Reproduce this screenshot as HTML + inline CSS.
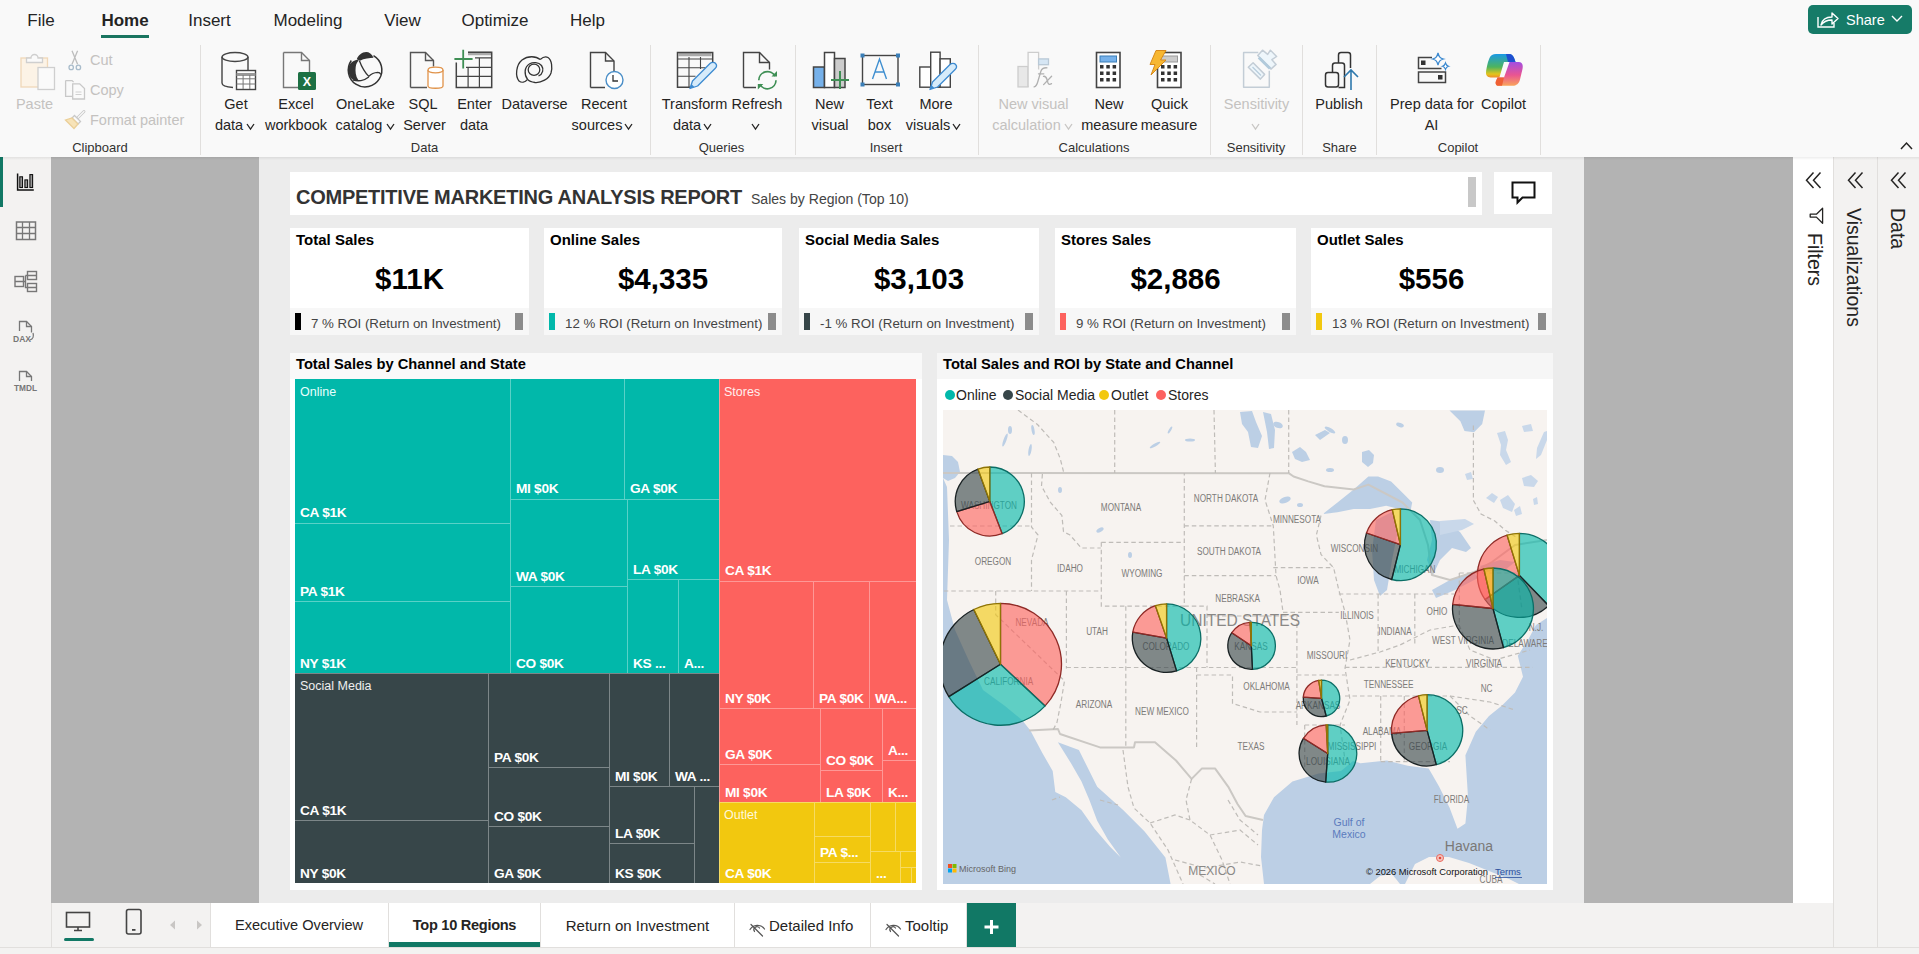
<!DOCTYPE html>
<html><head><meta charset="utf-8">
<style>
*{margin:0;padding:0;box-sizing:border-box}
html,body{width:1919px;height:954px;overflow:hidden;background:#f9f9f9;font-family:"Liberation Sans",sans-serif;color:#252423}
.a{position:absolute}
.t{position:absolute;white-space:nowrap;line-height:1}
#top{left:0;top:0;width:1919px;height:157px;background:#f9f9f9}
#nav{left:0;top:157px;width:51px;height:790px;background:#f3f2f1}
#gl{left:51px;top:157px;width:208px;height:746px;background:#b3b3b3}
#page{left:259px;top:157px;width:1325px;height:746px;background:#ececec}
#gr{left:1584px;top:157px;width:209px;height:746px;background:#b3b3b3}
#pf{left:1793px;top:157px;width:40px;height:746px;background:#fff}
#pv{left:1833px;top:157px;width:44px;height:790px;background:#f3f2f1;border-left:1px solid #e1dfdd}
#pd{left:1877px;top:157px;width:42px;height:790px;background:#f3f2f1;border-left:1px solid #e1dfdd}
#tabs{left:51px;top:903px;width:1782px;height:44px;background:#f3f2f1;border-left:1px solid #e1dfdd}
#bot{left:0;top:947px;width:1919px;height:7px;background:#f3f2f1;border-top:1px solid #e1dfdd}
</style></head><body>
<div id="top" class="a"></div>
<div id="nav" class="a"></div>
<div id="gl" class="a"></div>
<div id="page" class="a"></div>
<div id="gr" class="a"></div>
<div id="pf" class="a"></div>
<div id="pv" class="a"></div>
<div id="pd" class="a"></div>
<div id="tabs" class="a"></div>
<div id="bot" class="a"></div>
<div class="t" style="left:-109.0px;top:11.6px;width:300px;text-align:center;font-size:17px;color:#242424;">File</div>
<div class="t" style="left:-25.0px;top:11.6px;width:300px;text-align:center;font-size:17px;color:#242424;font-weight:bold;">Home</div>
<div class="t" style="left:59.5px;top:11.6px;width:300px;text-align:center;font-size:17px;color:#242424;">Insert</div>
<div class="t" style="left:158.0px;top:11.6px;width:300px;text-align:center;font-size:17px;color:#242424;">Modeling</div>
<div class="t" style="left:252.5px;top:11.6px;width:300px;text-align:center;font-size:17px;color:#242424;">View</div>
<div class="t" style="left:345.0px;top:11.6px;width:300px;text-align:center;font-size:17px;color:#242424;">Optimize</div>
<div class="t" style="left:437.5px;top:11.6px;width:300px;text-align:center;font-size:17px;color:#242424;">Help</div>
<div class="a" style="left:101px;top:35px;width:48px;height:3px;background:#1a7560"></div>
<div class="a" style="left:1808px;top:5px;width:104px;height:29px;background:#167b68;border-radius:5px"></div>
<div class="t" style="left:1846.0px;top:12.7px;font-size:14.5px;color:#fff;">Share</div>
<svg class="a" style="left:1808px;top:5px" width="104" height="29"><g fill="none" stroke="#fff" stroke-width="1.4"><path d="M10 12v10h16v-4"/><path d="M13 20c1-5 5-8 11-8v-4l6 5.5-6 5.5v-4c-4 0-8 1-11 5z" stroke-linejoin="round"/><path d="M84 11l5 5 5-5"/></g></svg>
<div class="t" style="left:-115.5px;top:96.7px;width:300px;text-align:center;font-size:14.5px;color:#c4c2c0;">Paste</div>
<div class="t" style="left:90.0px;top:52.7px;font-size:14.5px;color:#c4c2c0;">Cut</div>
<div class="t" style="left:90.0px;top:82.7px;font-size:14.5px;color:#c4c2c0;">Copy</div>
<div class="t" style="left:90.0px;top:112.7px;font-size:14.5px;color:#c4c2c0;">Format painter</div>
<div class="t" style="left:86.0px;top:96.7px;width:300px;text-align:center;font-size:14.5px;color:#252423;">Get</div>
<div class="t" style="left:79.0px;top:117.5px;width:300px;text-align:center;font-size:14.5px;color:#252423;">data</div>
<div class="t" style="left:146.0px;top:96.7px;width:300px;text-align:center;font-size:14.5px;color:#252423;">Excel</div>
<div class="t" style="left:146.0px;top:117.5px;width:300px;text-align:center;font-size:14.5px;color:#252423;">workbook</div>
<div class="t" style="left:215.5px;top:96.7px;width:300px;text-align:center;font-size:14.5px;color:#252423;">OneLake</div>
<div class="t" style="left:209.0px;top:117.5px;width:300px;text-align:center;font-size:14.5px;color:#252423;">catalog</div>
<div class="t" style="left:273.0px;top:96.7px;width:300px;text-align:center;font-size:14.5px;color:#252423;">SQL</div>
<div class="t" style="left:274.5px;top:117.5px;width:300px;text-align:center;font-size:14.5px;color:#252423;">Server</div>
<div class="t" style="left:324.5px;top:96.7px;width:300px;text-align:center;font-size:14.5px;color:#252423;">Enter</div>
<div class="t" style="left:324.0px;top:117.5px;width:300px;text-align:center;font-size:14.5px;color:#252423;">data</div>
<div class="t" style="left:384.5px;top:96.7px;width:300px;text-align:center;font-size:14.5px;color:#252423;">Dataverse</div>
<div class="t" style="left:454.0px;top:96.7px;width:300px;text-align:center;font-size:14.5px;color:#252423;">Recent</div>
<div class="t" style="left:447.0px;top:117.5px;width:300px;text-align:center;font-size:14.5px;color:#252423;">sources</div>
<div class="t" style="left:544.5px;top:96.7px;width:300px;text-align:center;font-size:14.5px;color:#252423;">Transform</div>
<div class="t" style="left:537.0px;top:117.5px;width:300px;text-align:center;font-size:14.5px;color:#252423;">data</div>
<div class="t" style="left:607.0px;top:96.7px;width:300px;text-align:center;font-size:14.5px;color:#252423;">Refresh</div>
<div class="t" style="left:679.5px;top:96.7px;width:300px;text-align:center;font-size:14.5px;color:#252423;">New</div>
<div class="t" style="left:680.0px;top:117.5px;width:300px;text-align:center;font-size:14.5px;color:#252423;">visual</div>
<div class="t" style="left:729.5px;top:96.7px;width:300px;text-align:center;font-size:14.5px;color:#252423;">Text</div>
<div class="t" style="left:729.5px;top:117.5px;width:300px;text-align:center;font-size:14.5px;color:#252423;">box</div>
<div class="t" style="left:786.0px;top:96.7px;width:300px;text-align:center;font-size:14.5px;color:#252423;">More</div>
<div class="t" style="left:778.0px;top:117.5px;width:300px;text-align:center;font-size:14.5px;color:#252423;">visuals</div>
<div class="t" style="left:883.5px;top:96.7px;width:300px;text-align:center;font-size:14.5px;color:#c4c2c0;">New visual</div>
<div class="t" style="left:876.5px;top:117.5px;width:300px;text-align:center;font-size:14.5px;color:#c4c2c0;">calculation</div>
<div class="t" style="left:959.0px;top:96.7px;width:300px;text-align:center;font-size:14.5px;color:#252423;">New</div>
<div class="t" style="left:959.5px;top:117.5px;width:300px;text-align:center;font-size:14.5px;color:#252423;">measure</div>
<div class="t" style="left:1019.5px;top:96.7px;width:300px;text-align:center;font-size:14.5px;color:#252423;">Quick</div>
<div class="t" style="left:1019.0px;top:117.5px;width:300px;text-align:center;font-size:14.5px;color:#252423;">measure</div>
<div class="t" style="left:1106.5px;top:96.7px;width:300px;text-align:center;font-size:14.5px;color:#c4c2c0;">Sensitivity</div>
<div class="t" style="left:1189.0px;top:96.7px;width:300px;text-align:center;font-size:14.5px;color:#252423;">Publish</div>
<div class="t" style="left:1282.0px;top:96.7px;width:300px;text-align:center;font-size:14.5px;color:#252423;">Prep data for</div>
<div class="t" style="left:1281.5px;top:117.5px;width:300px;text-align:center;font-size:14.5px;color:#252423;">AI</div>
<div class="t" style="left:1353.5px;top:96.7px;width:300px;text-align:center;font-size:14.5px;color:#252423;">Copilot</div>
<div class="t" style="left:-50.0px;top:141.0px;width:300px;text-align:center;font-size:13px;color:#323130;">Clipboard</div>
<div class="t" style="left:274.5px;top:141.0px;width:300px;text-align:center;font-size:13px;color:#323130;">Data</div>
<div class="t" style="left:571.5px;top:141.0px;width:300px;text-align:center;font-size:13px;color:#323130;">Queries</div>
<div class="t" style="left:736.0px;top:141.0px;width:300px;text-align:center;font-size:13px;color:#323130;">Insert</div>
<div class="t" style="left:944.0px;top:141.0px;width:300px;text-align:center;font-size:13px;color:#323130;">Calculations</div>
<div class="t" style="left:1106.0px;top:141.0px;width:300px;text-align:center;font-size:13px;color:#323130;">Sensitivity</div>
<div class="t" style="left:1189.5px;top:141.0px;width:300px;text-align:center;font-size:13px;color:#323130;">Share</div>
<div class="t" style="left:1308.0px;top:141.0px;width:300px;text-align:center;font-size:13px;color:#323130;">Copilot</div>
<div class="a" style="left:200px;top:45px;width:1px;height:110px;background:#e1dfdd"></div>
<div class="a" style="left:650px;top:45px;width:1px;height:110px;background:#e1dfdd"></div>
<div class="a" style="left:795px;top:45px;width:1px;height:110px;background:#e1dfdd"></div>
<div class="a" style="left:978px;top:45px;width:1px;height:110px;background:#e1dfdd"></div>
<div class="a" style="left:1210px;top:45px;width:1px;height:110px;background:#e1dfdd"></div>
<div class="a" style="left:1302px;top:45px;width:1px;height:110px;background:#e1dfdd"></div>
<div class="a" style="left:1376px;top:45px;width:1px;height:110px;background:#e1dfdd"></div>
<div class="a" style="left:1540px;top:45px;width:1px;height:110px;background:#e1dfdd"></div>
<svg class="a" style="left:0;top:0" width="1919" height="157">
<path d="M247 124l3.5 5l3.5 -5" fill="none" stroke="#252423" stroke-width="1.3"/><path d="M387 124l3.5 5l3.5 -5" fill="none" stroke="#252423" stroke-width="1.3"/><path d="M625 124l3.5 5l3.5 -5" fill="none" stroke="#252423" stroke-width="1.3"/><path d="M704 124l3.5 5l3.5 -5" fill="none" stroke="#252423" stroke-width="1.3"/><path d="M752 124l3.5 5l3.5 -5" fill="none" stroke="#252423" stroke-width="1.3"/><path d="M953 124l3.5 5l3.5 -5" fill="none" stroke="#252423" stroke-width="1.3"/><path d="M1065 124l3.5 5l3.5 -5" fill="none" stroke="#c8c6c4" stroke-width="1.3"/><path d="M1252 124l3.5 5l3.5 -5" fill="none" stroke="#c8c6c4" stroke-width="1.3"/><path d="M1901 149l5.5-6 5.5 6" fill="none" stroke="#252423" stroke-width="1.5"/><g fill="none" stroke-width="1.3"><rect x="21" y="58" width="26.5" height="29" stroke="#f0d8b8" fill="#fcf3e6"/><path d="M26.5 62.5v-4.5h4.5a3.5 3.5 0 0 1 7 0h4.5v4.5z" stroke="#cfcfcf" fill="#fafafa"/><rect x="38" y="67.5" width="16.5" height="22" stroke="#cfcfcf" fill="#fafafa"/><path d="M72 50.7l5.6 13.6M77.6 50.7l-5.6 13.6" stroke="#bdbdbd"/><circle cx="71.2" cy="67.4" r="2.2" stroke="#a9bccb"/><circle cx="78.4" cy="67.4" r="2.2" stroke="#a9bccb"/><path d="M65.6 80.6h6.5l1.5 1.5M65.6 80.6v15.8h6.5" stroke="#c8c8c8"/><path d="M72.7 83.8h7l4.8 4.8v10.4h-11.8z" stroke="#c8c8c8" fill="#fafafa"/><path d="M75.5 92h6M75.5 94.5h6" stroke="#d0d0d0" stroke-width="1"/><path d="M84 111.5l-6 6" stroke="#c8c8c8" stroke-width="2.8" stroke-linecap="round"/><path d="M84 111.5l-6 6" stroke="#fafafa" stroke-width="1.1" stroke-linecap="round"/><path d="M74.5 115.5l6 6-2.5 2.5-6-6z" stroke="#c8c8c8" fill="#fafafa"/><path d="M72 118l6 6-4 4.5-8.5-8.5z" stroke="#ebcf98" fill="#f7e3b8"/></g>
<g fill="none" stroke="#444" stroke-width="1.4"><ellipse cx="235" cy="57" rx="13" ry="4.5"/><path d="M222 57v26c0 2.5 4 4 11 4.5M248 57v13"/><rect x="236.5" y="70.5" width="19" height="19" fill="#fff"/><path d="M236.5 74.5h19" stroke="#999" stroke-width="3"/><path d="M236.5 78.8h19M236.5 84h19M243.1 75v14M249.8 75v14" stroke="#777" stroke-width="1"/></g>
<g fill="none" stroke="#777" stroke-width="1.4"><path d="M283.5 52.5h18l8 8v12M298 87.5h-14.5v-35"/><path d="M301.5 52.5v8h8"/></g><rect x="298" y="72" width="18" height="18" rx="1.5" fill="#1d7044"/><text x="307" y="86" text-anchor="middle" font-family="Liberation Sans" font-weight="bold" font-size="12.5" fill="#fff">X</text>
<path d="M373.5 55.6 A16.8 16.8 0 1 1 351.3 60.5" fill="none" stroke="#333" stroke-width="1.5"/><path d="M356.8 59.2 C358 55.5 362 52.1 366.2 52.1 C369 52.1 372 54 373.5 57.8 C370 58 364 58.6 359.9 60.7z" fill="#333"/><path d="M357.3 59.7 C352 60.5 348.4 64.5 348.4 69.5 C348.4 75 351 79 353.6 80.1 L358.3 80.1 C355.5 76 355.2 71 355.7 67 C356 63.5 357.5 61.5 358.9 60.7z" fill="#333"/><path d="M359.4 60.7 C361 65 363.5 71 368.8 76.4 C371 74 374 72.5 377.7 72.3 C379 72.3 380.5 73.5 380.9 74.4" fill="none" stroke="#333" stroke-width="1.3"/><path d="M353.1 80.1 C356 80.8 359 80.8 361 80.6 C364 80.2 366.5 78.8 368.8 77" fill="none" stroke="#333" stroke-width="1.3"/>
<g fill="none" stroke="#555" stroke-width="1.4"><path d="M410.5 87.5v-35h15l8 8v6M427 87.5h-16.5"/><path d="M425.5 52.5v8h8"/></g><g fill="#fff" stroke="#e0934a" stroke-width="1.3"><path d="M428 70v16c0 3 15 3 15 0v-16"/><ellipse cx="435.5" cy="70" rx="7.5" ry="2.8"/></g>
<path d="M468 53.5h23.2" stroke="#aaa" stroke-width="3.5"/><g fill="none" stroke="#444" stroke-width="1.5"><path d="M468 52.3h23.7v35.2h-35.4v-25"/><path d="M475 57.8h16.7M466 67.4h25.7M456.3 76.3h35.4M468.1 67.4v20.1M479.4 57.8v29.7" stroke-width="1.2"/></g><path d="M463.2 49.7v18.7M454.4 59h18.2" stroke="#3f8f55" stroke-width="1.8"/>
<g fill="none" stroke="#333" stroke-width="1.3"><path d="M540.2 59.6C536 56 528 55.5 522 60C516 65 515 76 519 81C521.5 83 525 82.5 527.6 79.4"/><path d="M540.2 59.6C543 57 546 56.5 548 57.5C552 60 552.5 68 551 73C549 79 541 83 535 82.5C531 82 528.5 80.5 527.6 79.4"/><path d="M527.6 79.4C524 75 524 67 529.7 63.8C533 62 538.5 62 541.5 65.5C544 69 543 74 538.5 76"/><ellipse cx="534" cy="69.7" rx="5.8" ry="5.6"/></g>
<g fill="none" stroke="#444" stroke-width="1.4"><path d="M590.5 87.5v-35h15l8.5 8.5v11M605 87.5h-14.5"/><path d="M605.5 52.5v8.5h8.5"/></g><circle cx="614.5" cy="80" r="8.5" fill="#fff" stroke="#4a8ec7" stroke-width="1.4"/><path d="M613 75v6h5" fill="none" stroke="#333" stroke-width="1.3"/>
<path d="M678.5 54.5h33" stroke="#aaa" stroke-width="3.5"/><g fill="none" stroke="#444" stroke-width="1.5"><path d="M712.7 68v-15.5h-35.2v34.7h13"/><path d="M677.5 59h35.2M677.5 67.7h28M677.5 76.3h18M689 57v30M700.5 57v12" stroke-width="1.1"/></g><path d="M690 88.5l2.5-7.5 17.5-17.5c1.6-1.6 4.4-1.6 5.6 0 1.2 1.4 1 3.6-.5 5l-17.5 17.5z" fill="#d6ebfa" stroke="#3d8ad0" stroke-width="1.3" stroke-linejoin="round"/><path d="M690 88.5l1.4-4.5 3 3z" fill="#3d8ad0"/>
<g fill="none" stroke="#444" stroke-width="1.4"><path d="M743.5 87.5v-35h16l10 10v7M756 87.5h-12.5"/><path d="M759.5 52.5v10h10"/></g><g fill="none" stroke="#3f8f55" stroke-width="1.7"><path d="M758.8 80.2a8.6 8.6 0 0 1 16.2-4"/><path d="M776 80.2a8.6 8.6 0 0 1-16.2 4"/></g><path d="M771.5 76.5h5.5v-5.5z" fill="#3f8f55"/><path d="M763.3 84h-5.5v5.5z" fill="#3f8f55"/>
<g stroke="#444" stroke-width="1.5"><rect x="813.5" y="67" width="11" height="20.5" fill="#76b1ea"/><rect x="824.5" y="52.5" width="10" height="35" fill="#fff"/><rect x="834.5" y="58.5" width="10.5" height="29" fill="#ccc"/></g><path d="M840 71v18M831 80h18" stroke="#3f8f55" stroke-width="2"/>
<rect x="862.5" y="55.5" width="35.5" height="29" fill="none" stroke="#444" stroke-width="1.4"/><rect x="860.5" y="53.5" width="4" height="4" fill="#3a7fb8"/><rect x="896" y="53.5" width="4" height="4" fill="#3a7fb8"/><rect x="860.5" y="82.5" width="4" height="4" fill="#3a7fb8"/><rect x="896" y="82.5" width="4" height="4" fill="#3a7fb8"/><path d="M872.5 79l7-20 7 20M875 72h9" fill="none" stroke="#3f8fd0" stroke-width="1.4"/>
<g fill="#fff" stroke="#444" stroke-width="1.4"><rect x="919.8" y="67" width="10.9" height="20.2"/><rect x="930.7" y="52.2" width="9.4" height="35"/><rect x="940.1" y="58.8" width="10.2" height="28.4"/></g><path d="M930 89.5l2.5-7.5 17.5-17.5c1.6-1.6 4.4-1.6 5.6 0 1.2 1.4 1 3.6-.5 5l-17.5 17.5z" fill="#d6ebfa" stroke="#3d8ad0" stroke-width="1.3" stroke-linejoin="round"/><path d="M930 89.5l1.4-4.5 3 3z" fill="#3d8ad0"/>
<g stroke="#cdcdcd" stroke-width="1.3"><rect x="1018" y="66.5" width="10.1" height="20.4" fill="#e8e8e8"/><path d="M1028.1 86.9V52.4H1038.6V69.6" fill="#fafafa"/><rect x="1038.6" y="58.9" width="9.9" height="5.8" fill="#d6e6f4" stroke="#b9c9d6"/></g><g fill="none" stroke="#b0b0b0" stroke-width="1.3" stroke-linecap="round"><path d="M1034.1 86.9C1036 86.5 1037 85 1038 81L1040.8 71.5C1041.8 68.5 1043.5 67.5 1047 67.8"/><path d="M1038.5 73.8H1043.8"/><path d="M1043.5 76.3C1045.3 76 1046.3 77.2 1047 79.5L1048 83C1048.6 84.6 1050 84.6 1051.5 83.6"/><path d="M1051.6 76.3L1043.6 84.6"/></g>
<rect x="1096.5" y="52.5" width="23.5" height="35" fill="#fff" stroke="#444" stroke-width="1.6"/><rect x="1100" y="56" width="16.5" height="6" fill="#76b1ea" stroke="#3a7fb8" stroke-width="1"/><rect x="1100.0" y="65.0" width="3.5" height="3.5" fill="#333"/><rect x="1100.0" y="71.5" width="3.5" height="3.5" fill="#333"/><rect x="1100.0" y="78.0" width="3.5" height="3.5" fill="#333"/><rect x="1106.3" y="65.0" width="3.5" height="3.5" fill="#333"/><rect x="1106.3" y="71.5" width="3.5" height="3.5" fill="#333"/><rect x="1106.3" y="78.0" width="3.5" height="3.5" fill="#333"/><rect x="1112.6" y="65.0" width="3.5" height="3.5" fill="#333"/><rect x="1112.6" y="71.5" width="3.5" height="3.5" fill="#333"/><rect x="1112.6" y="78.0" width="3.5" height="3.5" fill="#333"/>
<rect x="1157.5" y="52.5" width="23.5" height="35" fill="#fff" stroke="#444" stroke-width="1.6"/><rect x="1161" y="56" width="16.5" height="6" fill="#ccc" stroke="#999" stroke-width="1"/><rect x="1161.0" y="65.0" width="3.5" height="3.5" fill="#333"/><rect x="1161.0" y="71.5" width="3.5" height="3.5" fill="#333"/><rect x="1161.0" y="78.0" width="3.5" height="3.5" fill="#333"/><rect x="1167.3" y="65.0" width="3.5" height="3.5" fill="#333"/><rect x="1167.3" y="71.5" width="3.5" height="3.5" fill="#333"/><rect x="1167.3" y="78.0" width="3.5" height="3.5" fill="#333"/><rect x="1173.6" y="65.0" width="3.5" height="3.5" fill="#333"/><rect x="1173.6" y="71.5" width="3.5" height="3.5" fill="#333"/><rect x="1173.6" y="78.0" width="3.5" height="3.5" fill="#333"/><path d="M1156 50.5h10l-5.5 9.5h5.5l-15 15 4-10.5h-5z" fill="#f7b731" stroke="#d88a1a" stroke-width="1" stroke-linejoin="round"/>
<g stroke="#c3cdd6" stroke-width="1.5" stroke-linejoin="round"><path d="M1258.3 52.6H1243.6V87.2H1269.3V70.7" fill="none"/><path d="M1248.3 67.3L1253.1 62.8L1264.6 74.4L1260.4 79.1z" fill="#eef6fb"/><path d="M1257.8 55.5L1262.5 50.2L1267.7 54.4L1270.4 50.2L1276.6 56.5L1271.9 59.7L1276.1 64.4L1270.9 69.1z" fill="#eef6fb"/></g><path d="M1252.5 67L1261 75.5" stroke="#b7cddc" stroke-width="1.2"/><path d="M1258.8 57.5L1270 68.5" stroke="#b1cadb" stroke-width="3"/>
<g fill="none" stroke="#333" stroke-width="1.5"><rect x="1325.5" y="72.5" width="13" height="14.5" rx="2.5"/><path d="M1332.5 72.5v-7a2.5 2.5 0 0 1 2.5-2.5h7a2.5 2.5 0 0 1 2.5 2.5v22h-6"/><path d="M1338.5 63v-8a2.5 2.5 0 0 1 2.5-2.5h7a2.5 2.5 0 0 1 2.5 2.5v13"/></g><path d="M1351 90v-20M1344 77l7-7 7 7" fill="none" stroke="#2f79ad" stroke-width="1.6"/>
<g fill="none" stroke="#444" stroke-width="1.5"><path d="M1432 57.5h-13.5v11h23"/><rect x="1418.5" y="72" width="27" height="10.5"/></g><rect x="1421" y="60.5" width="4.5" height="4.5" fill="#333"/><rect x="1438" y="75" width="4.5" height="4.5" fill="#333"/><path d="M1438 53c1 4 2 5 5.5 6-3.5 1-4.5 2-5.5 6-1-4-2-5-5.5-6 3.5-1 4.5-2 5.5-6z" fill="#fff" stroke="#3d8ad0" stroke-width="1.3"/><path d="M1445.5 63c.6 2 1 2.6 3 3.2-2 .6-2.4 1.2-3 3.2-.6-2-1-2.6-3-3.2 2-.6 2.4-1.2 3-3.2z" fill="#fff" stroke="#3d8ad0" stroke-width="1.2"/>
<defs><linearGradient id="cpa" x1="0" y1="0" x2="0" y2="1"><stop offset="0" stop-color="#1a9ae6"/><stop offset=".55" stop-color="#4db45e"/><stop offset=".85" stop-color="#e3c51c"/><stop offset="1" stop-color="#f08a2a"/></linearGradient><linearGradient id="cpb" x1="0" y1="0" x2="0" y2="1"><stop offset="0" stop-color="#a24ee2"/><stop offset=".55" stop-color="#ea5591"/><stop offset="1" stop-color="#f9a55a"/></linearGradient></defs><path d="M1496 54H1509C1512 54 1513.5 56 1514.5 59L1515.5 62H1504L1499.4 77.5H1493.8C1489 78 1486 76.5 1486 73C1486 70 1487 66 1488 62L1489.5 58C1490.5 55.5 1493 54 1496 54z" fill="url(#cpa)"/><path d="M1506 54H1509C1512 54 1513.5 56 1514.5 59L1515.5 62H1508z" fill="#1f4fd0"/><path d="M1509.5 62H1519C1522 62 1523.5 65 1522.5 69L1520 79.5C1519 83.5 1516.5 85.8 1512.5 85.8H1498.5C1496 85.8 1495 83.5 1496 81L1497.5 77.5H1504z" fill="url(#cpb)"/><path d="M1497.5 77.5H1504L1502 85.8H1498.5C1496 85.8 1495 83.5 1496 81z" fill="#ef6034"/>
</svg>
<div class="a" style="left:0;top:157px;width:3px;height:50px;background:#117865"></div>
<svg class="a" style="left:0;top:157px" width="51" height="250"><path d="M17.6 16.4V32.9H33.8" fill="none" stroke="#111" stroke-width="1.5"/><g fill="#999" stroke="#111" stroke-width="1.1"><rect x="19.8" y="19.8" width="2.7" height="10.7"/><rect x="24.9" y="22.9" width="2.7" height="7.6"/><rect x="29.9" y="17.6" width="2.7" height="12.9"/></g><g fill="none" stroke="#777" stroke-width="1.5"><rect x="16.5" y="65" width="19" height="17.5"/><path d="M16.5 70.5h19M16.5 76.5h19M22.5 65v17.5M29.5 65v17.5" stroke-width="1.3"/></g><g fill="none" stroke="#777" stroke-width="1.4"><rect x="15" y="119.5" width="8.5" height="10"/><rect x="27.5" y="114.5" width="9" height="8"/><rect x="27.5" y="126.5" width="9" height="8"/><path d="M23.5 124.5h2M25.5 118.5v12h2M25.5 118.5h2M15 124.5h8.5M27.5 118.5h9M27.5 130.5h9"/></g><g fill="none" stroke="#777" stroke-width="1.3"><path d="M19.5 174v-9.5h7l5 5v6"/><path d="M26.5 164.5v5h5"/><path d="M33 176c1 3 0 6-3 7"/></g><text x="13" y="184.5" font-family="Liberation Sans" font-weight="bold" font-size="8.5" fill="#777">DAX</text><g fill="none" stroke="#777" stroke-width="1.3"><path d="M19.5 224v-9.5h7l5 5v4.5"/><path d="M26.5 214.5v5h5"/></g><text x="14" y="234" font-family="Liberation Sans" font-weight="bold" font-size="8.5" fill="#777" textLength="23" lengthAdjust="spacingAndGlyphs">TMDL</text></svg>
<div class="a" style="left:0;top:157px;width:1919px;height:3px;background:linear-gradient(rgba(0,0,0,.07),rgba(0,0,0,0))"></div>
<svg class="a" style="left:1793px;top:157px" width="126" height="200"><path d="M20.5 15.5l-7 7.75 7 7.75M27.5 15.5l-7 7.75 7 7.75" fill="none" stroke="#252423" stroke-width="1.5"/><path d="M62.5 15.5l-7 7.75 7 7.75M69.5 15.5l-7 7.75 7 7.75" fill="none" stroke="#252423" stroke-width="1.5"/><path d="M105.5 15.5l-7 7.75 7 7.75M112.5 15.5l-7 7.75 7 7.75" fill="none" stroke="#252423" stroke-width="1.5"/><path d="M29.6 51.3V66.3L23.4 60.1H17.2V57.2H23.4z" fill="none" stroke="#252423" stroke-width="1.3" stroke-linejoin="round"/></svg>
<div class="t" style="left:1806px;top:233px;font-size:19.5px;color:#252423;transform-origin:0 0;transform:translate(18px,0) rotate(90deg)">Filters</div>
<div class="t" style="left:1845px;top:208px;font-size:19.5px;color:#252423;transform-origin:0 0;transform:translate(18px,0) rotate(90deg)">Visualizations</div>
<div class="t" style="left:1889px;top:208px;font-size:19.5px;color:#252423;transform-origin:0 0;transform:translate(18px,0) rotate(90deg)">Data</div>
<div class="a" style="left:211px;top:903px;width:177px;height:44px;background:#fff"></div>
<div class="a" style="left:388px;top:903px;width:1px;height:44px;background:#e1dfdd"></div>
<div class="a" style="left:389px;top:903px;width:151px;height:44px;background:#fff"></div>
<div class="a" style="left:540px;top:903px;width:1px;height:44px;background:#e1dfdd"></div>
<div class="a" style="left:541px;top:903px;width:193px;height:44px;background:#fff"></div>
<div class="a" style="left:734px;top:903px;width:1px;height:44px;background:#e1dfdd"></div>
<div class="a" style="left:735px;top:903px;width:135px;height:44px;background:#fff"></div>
<div class="a" style="left:870px;top:903px;width:1px;height:44px;background:#e1dfdd"></div>
<div class="a" style="left:871px;top:903px;width:95px;height:44px;background:#fff"></div>
<div class="a" style="left:966px;top:903px;width:1px;height:44px;background:#e1dfdd"></div>
<div class="a" style="left:210px;top:903px;width:1px;height:44px;background:#e1dfdd"></div>
<div class="a" style="left:389px;top:942px;width:151px;height:5px;background:#117865"></div>
<div class="t" style="left:149.0px;top:918.3px;width:300px;text-align:center;font-size:14.6px;color:#252423;">Executive Overview</div>
<div class="t" style="left:314.5px;top:918.3px;width:300px;text-align:center;font-size:14.6px;color:#252423;font-weight:bold;letter-spacing:-0.3px;">Top 10 Regions</div>
<div class="t" style="left:487.5px;top:918.3px;width:300px;text-align:center;font-size:15px;color:#252423;">Return on Investment</div>
<div class="t" style="left:769.0px;top:918.3px;font-size:15px;color:#252423;">Detailed Info</div>
<div class="t" style="left:905.0px;top:918.3px;font-size:15px;color:#252423;">Tooltip</div>
<div class="a" style="left:967px;top:903px;width:49px;height:44px;background:#117865"></div>
<svg class="a" style="left:0;top:903px" width="1020" height="44"><path d="M991.5 17v14M984.5 24h14" stroke="#fff" stroke-width="3"/><g fill="none" stroke="#555" stroke-width="1.2" stroke-linecap="round"><path d="M750 26.5C753 21.5 761 20.5 764.5 26"/><path d="M754.5 28.5A3 3 0 0 1 759.5 25"/><path d="M751 21.5L762.5 33"/></g><g fill="none" stroke="#555" stroke-width="1.2" stroke-linecap="round"><path d="M886 26.5C889 21.5 897 20.5 900.5 26"/><path d="M890.5 28.5A3 3 0 0 1 895.5 25"/><path d="M887 21.5L898.5 33"/></g><g fill="none" stroke="#444" stroke-width="1.6"><rect x="66.5" y="9.5" width="23" height="14.5"/><path d="M78 24v3M74 27.5h8"/></g><rect x="64" y="35" width="30" height="3" rx="1.5" fill="#117865"/><g fill="none" stroke="#444" stroke-width="1.6"><rect x="126.5" y="6.5" width="14.5" height="24.5" rx="2"/></g><rect x="132" y="26" width="3.5" height="1.8" fill="#444"/><path d="M175 17.5l-5 4.5 5 4.5z" fill="#c8c6c4"/><path d="M197 17.5l5 4.5-5 4.5z" fill="#c8c6c4"/></svg>
<div class="a" style="left:290px;top:172px;width:1192px;height:43px;background:#fff"></div>
<div class="t" style="left:296.0px;top:187.1px;font-size:20px;color:#333;font-weight:bold;letter-spacing:-0.25px;">COMPETITIVE MARKETING ANALYSIS REPORT</div>
<div class="t" style="left:751.0px;top:192.1px;font-size:14.05px;color:#444;">Sales by Region (Top 10)</div>
<div class="a" style="left:1468px;top:177px;width:8px;height:30px;background:#c8c8c8"></div>
<div class="a" style="left:1494px;top:172px;width:58px;height:42px;background:#fff"></div>
<svg class="a" style="left:1494px;top:172px" width="58" height="42"><path d="M18.5 10.5h22v15h-12l-5 5v-5h-5z" fill="none" stroke="#111" stroke-width="2" stroke-linejoin="miter"/></svg>
<div class="a" style="left:290px;top:228px;width:239px;height:107px;background:#fff"></div>
<div class="a" style="left:290px;top:308px;width:239px;height:27px;background:#f7f7f7"></div>
<div class="t" style="left:296.0px;top:231.8px;font-size:15px;color:#000;font-weight:bold;">Total Sales</div>
<div class="t" style="left:259.5px;top:264.0px;width:300px;text-align:center;font-size:29.5px;color:#000;font-weight:bold;">$11K</div>
<div class="a" style="left:295px;top:313px;width:6px;height:17px;background:#000"></div>
<div class="a" style="left:515px;top:313px;width:8px;height:17px;background:#8c8c8c"></div>
<div class="t" style="left:311.0px;top:316.7px;font-size:13.3px;color:#444;">7 % ROI (Return on Investment)</div>
<div class="a" style="left:544px;top:228px;width:238px;height:107px;background:#fff"></div>
<div class="a" style="left:544px;top:308px;width:238px;height:27px;background:#f7f7f7"></div>
<div class="t" style="left:550.0px;top:231.8px;font-size:15px;color:#000;font-weight:bold;">Online Sales</div>
<div class="t" style="left:513.0px;top:264.0px;width:300px;text-align:center;font-size:29.5px;color:#000;font-weight:bold;">$4,335</div>
<div class="a" style="left:549px;top:313px;width:6px;height:17px;background:#01b8aa"></div>
<div class="a" style="left:768px;top:313px;width:8px;height:17px;background:#8c8c8c"></div>
<div class="t" style="left:565.0px;top:316.7px;font-size:13.3px;color:#444;">12 % ROI (Return on Investment)</div>
<div class="a" style="left:799px;top:228px;width:240px;height:107px;background:#fff"></div>
<div class="a" style="left:799px;top:308px;width:240px;height:27px;background:#f7f7f7"></div>
<div class="t" style="left:805.0px;top:231.8px;font-size:15px;color:#000;font-weight:bold;">Social Media Sales</div>
<div class="t" style="left:769.0px;top:264.0px;width:300px;text-align:center;font-size:29.5px;color:#000;font-weight:bold;">$3,103</div>
<div class="a" style="left:804px;top:313px;width:6px;height:17px;background:#374649"></div>
<div class="a" style="left:1025px;top:313px;width:8px;height:17px;background:#8c8c8c"></div>
<div class="t" style="left:820.0px;top:316.7px;font-size:13.3px;color:#444;">-1 % ROI (Return on Investment)</div>
<div class="a" style="left:1055px;top:228px;width:241px;height:107px;background:#fff"></div>
<div class="a" style="left:1055px;top:308px;width:241px;height:27px;background:#f7f7f7"></div>
<div class="t" style="left:1061.0px;top:231.8px;font-size:15px;color:#000;font-weight:bold;">Stores Sales</div>
<div class="t" style="left:1025.5px;top:264.0px;width:300px;text-align:center;font-size:29.5px;color:#000;font-weight:bold;">$2,886</div>
<div class="a" style="left:1060px;top:313px;width:6px;height:17px;background:#fd625e"></div>
<div class="a" style="left:1282px;top:313px;width:8px;height:17px;background:#8c8c8c"></div>
<div class="t" style="left:1076.0px;top:316.7px;font-size:13.3px;color:#444;">9 % ROI (Return on Investment)</div>
<div class="a" style="left:1311px;top:228px;width:241px;height:107px;background:#fff"></div>
<div class="a" style="left:1311px;top:308px;width:241px;height:27px;background:#f7f7f7"></div>
<div class="t" style="left:1317.0px;top:231.8px;font-size:15px;color:#000;font-weight:bold;">Outlet Sales</div>
<div class="t" style="left:1281.5px;top:264.0px;width:300px;text-align:center;font-size:29.5px;color:#000;font-weight:bold;">$556</div>
<div class="a" style="left:1316px;top:313px;width:6px;height:17px;background:#f2c80f"></div>
<div class="a" style="left:1538px;top:313px;width:8px;height:17px;background:#8c8c8c"></div>
<div class="t" style="left:1332.0px;top:316.7px;font-size:13.3px;color:#444;">13 % ROI (Return on Investment)</div>
<div class="a" style="left:290px;top:353px;width:632px;height:537px;background:#fff"></div>
<div class="a" style="left:290px;top:353px;width:632px;height:26px;background:#f9f9f9"></div>
<div class="t" style="left:296.0px;top:357.1px;font-size:14.7px;color:#000;font-weight:bold;">Total Sales by Channel and State</div>
<div class="a" style="left:295px;top:379px;width:215px;height:144px;background:#01b8aa;overflow:hidden;"><div class="t" style="left:5px;top:127.4px;font-size:13.7px;font-weight:bold;color:#fff;letter-spacing:-0.3px">CA $1K</div></div>
<div class="a" style="left:295px;top:523px;width:215px;height:78px;background:#01b8aa;overflow:hidden;border-top:1px solid rgba(255,255,255,.35);"><div class="t" style="left:5px;top:61.4px;font-size:13.7px;font-weight:bold;color:#fff;letter-spacing:-0.3px">PA $1K</div></div>
<div class="a" style="left:295px;top:601px;width:215px;height:72px;background:#01b8aa;overflow:hidden;border-top:1px solid rgba(255,255,255,.35);"><div class="t" style="left:5px;top:55.4px;font-size:13.7px;font-weight:bold;color:#fff;letter-spacing:-0.3px">NY $1K</div></div>
<div class="a" style="left:510px;top:379px;width:114px;height:120px;background:#01b8aa;overflow:hidden;border-left:1px solid rgba(255,255,255,.35);"><div class="t" style="left:5px;top:103.4px;font-size:13.7px;font-weight:bold;color:#fff;letter-spacing:-0.3px">MI $0K</div></div>
<div class="a" style="left:624px;top:379px;width:95px;height:120px;background:#01b8aa;overflow:hidden;border-left:1px solid rgba(255,255,255,.35);"><div class="t" style="left:5px;top:103.4px;font-size:13.7px;font-weight:bold;color:#fff;letter-spacing:-0.3px">GA $0K</div></div>
<div class="a" style="left:510px;top:499px;width:117px;height:87px;background:#01b8aa;overflow:hidden;border-left:1px solid rgba(255,255,255,.35);border-top:1px solid rgba(255,255,255,.35);"><div class="t" style="left:5px;top:70.4px;font-size:13.7px;font-weight:bold;color:#fff;letter-spacing:-0.3px">WA $0K</div></div>
<div class="a" style="left:510px;top:586px;width:117px;height:87px;background:#01b8aa;overflow:hidden;border-left:1px solid rgba(255,255,255,.35);border-top:1px solid rgba(255,255,255,.35);"><div class="t" style="left:5px;top:70.4px;font-size:13.7px;font-weight:bold;color:#fff;letter-spacing:-0.3px">CO $0K</div></div>
<div class="a" style="left:627px;top:499px;width:92px;height:80px;background:#01b8aa;overflow:hidden;border-left:1px solid rgba(255,255,255,.35);border-top:1px solid rgba(255,255,255,.35);"><div class="t" style="left:5px;top:63.4px;font-size:13.7px;font-weight:bold;color:#fff;letter-spacing:-0.3px">LA $0K</div></div>
<div class="a" style="left:627px;top:579px;width:51px;height:94px;background:#01b8aa;overflow:hidden;border-left:1px solid rgba(255,255,255,.35);border-top:1px solid rgba(255,255,255,.35);"><div class="t" style="left:5px;top:77.4px;font-size:13.7px;font-weight:bold;color:#fff;letter-spacing:-0.3px">KS ...</div></div>
<div class="a" style="left:678px;top:579px;width:41px;height:94px;background:#01b8aa;overflow:hidden;border-left:1px solid rgba(255,255,255,.35);border-top:1px solid rgba(255,255,255,.35);"><div class="t" style="left:5px;top:77.4px;font-size:13.7px;font-weight:bold;color:#fff;letter-spacing:-0.3px">A...</div></div>
<div class="a" style="left:295px;top:673px;width:193px;height:147px;background:#374649;overflow:hidden;border-top:1px solid rgba(255,255,255,.35);"><div class="t" style="left:5px;top:130.4px;font-size:13.7px;font-weight:bold;color:#fff;letter-spacing:-0.3px">CA $1K</div></div>
<div class="a" style="left:295px;top:820px;width:193px;height:63px;background:#374649;overflow:hidden;border-top:1px solid rgba(255,255,255,.35);"><div class="t" style="left:5px;top:46.4px;font-size:13.7px;font-weight:bold;color:#fff;letter-spacing:-0.3px">NY $0K</div></div>
<div class="a" style="left:488px;top:673px;width:121px;height:94px;background:#374649;overflow:hidden;border-left:1px solid rgba(255,255,255,.35);border-top:1px solid rgba(255,255,255,.35);"><div class="t" style="left:5px;top:77.4px;font-size:13.7px;font-weight:bold;color:#fff;letter-spacing:-0.3px">PA $0K</div></div>
<div class="a" style="left:488px;top:767px;width:121px;height:59px;background:#374649;overflow:hidden;border-left:1px solid rgba(255,255,255,.35);border-top:1px solid rgba(255,255,255,.35);"><div class="t" style="left:5px;top:42.4px;font-size:13.7px;font-weight:bold;color:#fff;letter-spacing:-0.3px">CO $0K</div></div>
<div class="a" style="left:488px;top:826px;width:121px;height:57px;background:#374649;overflow:hidden;border-left:1px solid rgba(255,255,255,.35);border-top:1px solid rgba(255,255,255,.35);"><div class="t" style="left:5px;top:40.4px;font-size:13.7px;font-weight:bold;color:#fff;letter-spacing:-0.3px">GA $0K</div></div>
<div class="a" style="left:609px;top:673px;width:60px;height:113px;background:#374649;overflow:hidden;border-left:1px solid rgba(255,255,255,.35);border-top:1px solid rgba(255,255,255,.35);"><div class="t" style="left:5px;top:96.4px;font-size:13.7px;font-weight:bold;color:#fff;letter-spacing:-0.3px">MI $0K</div></div>
<div class="a" style="left:669px;top:673px;width:50px;height:113px;background:#374649;overflow:hidden;border-left:1px solid rgba(255,255,255,.35);border-top:1px solid rgba(255,255,255,.35);"><div class="t" style="left:5px;top:96.4px;font-size:13.7px;font-weight:bold;color:#fff;letter-spacing:-0.3px">WA ...</div></div>
<div class="a" style="left:609px;top:786px;width:85px;height:57px;background:#374649;overflow:hidden;border-left:1px solid rgba(255,255,255,.35);border-top:1px solid rgba(255,255,255,.35);"><div class="t" style="left:5px;top:40.4px;font-size:13.7px;font-weight:bold;color:#fff;letter-spacing:-0.3px">LA $0K</div></div>
<div class="a" style="left:609px;top:843px;width:85px;height:40px;background:#374649;overflow:hidden;border-left:1px solid rgba(255,255,255,.35);border-top:1px solid rgba(255,255,255,.35);"><div class="t" style="left:5px;top:23.4px;font-size:13.7px;font-weight:bold;color:#fff;letter-spacing:-0.3px">KS $0K</div></div>
<div class="a" style="left:694px;top:786px;width:25px;height:97px;background:#374649;overflow:hidden;border-left:1px solid rgba(255,255,255,.35);border-top:1px solid rgba(255,255,255,.35);"></div>
<div class="a" style="left:719px;top:379px;width:197px;height:202px;background:#fd625e;overflow:hidden;border-left:1px solid rgba(255,255,255,.35);"><div class="t" style="left:5px;top:185.4px;font-size:13.7px;font-weight:bold;color:#fff;letter-spacing:-0.3px">CA $1K</div></div>
<div class="a" style="left:719px;top:581px;width:94px;height:127px;background:#fd625e;overflow:hidden;border-left:1px solid rgba(255,255,255,.35);border-top:1px solid rgba(255,255,255,.35);"><div class="t" style="left:5px;top:110.4px;font-size:13.7px;font-weight:bold;color:#fff;letter-spacing:-0.3px">NY $0K</div></div>
<div class="a" style="left:813px;top:581px;width:56px;height:127px;background:#fd625e;overflow:hidden;border-left:1px solid rgba(255,255,255,.35);border-top:1px solid rgba(255,255,255,.35);"><div class="t" style="left:5px;top:110.4px;font-size:13.7px;font-weight:bold;color:#fff;letter-spacing:-0.3px">PA $0K</div></div>
<div class="a" style="left:869px;top:581px;width:47px;height:127px;background:#fd625e;overflow:hidden;border-left:1px solid rgba(255,255,255,.35);border-top:1px solid rgba(255,255,255,.35);"><div class="t" style="left:5px;top:110.4px;font-size:13.7px;font-weight:bold;color:#fff;letter-spacing:-0.3px">WA...</div></div>
<div class="a" style="left:719px;top:708px;width:101px;height:56px;background:#fd625e;overflow:hidden;border-left:1px solid rgba(255,255,255,.35);border-top:1px solid rgba(255,255,255,.35);"><div class="t" style="left:5px;top:39.4px;font-size:13.7px;font-weight:bold;color:#fff;letter-spacing:-0.3px">GA $0K</div></div>
<div class="a" style="left:719px;top:764px;width:101px;height:38px;background:#fd625e;overflow:hidden;border-left:1px solid rgba(255,255,255,.35);border-top:1px solid rgba(255,255,255,.35);"><div class="t" style="left:5px;top:21.4px;font-size:13.7px;font-weight:bold;color:#fff;letter-spacing:-0.3px">MI $0K</div></div>
<div class="a" style="left:820px;top:708px;width:62px;height:62px;background:#fd625e;overflow:hidden;border-left:1px solid rgba(255,255,255,.35);border-top:1px solid rgba(255,255,255,.35);"><div class="t" style="left:5px;top:45.4px;font-size:13.7px;font-weight:bold;color:#fff;letter-spacing:-0.3px">CO $0K</div></div>
<div class="a" style="left:820px;top:770px;width:62px;height:32px;background:#fd625e;overflow:hidden;border-left:1px solid rgba(255,255,255,.35);border-top:1px solid rgba(255,255,255,.35);"><div class="t" style="left:5px;top:15.4px;font-size:13.7px;font-weight:bold;color:#fff;letter-spacing:-0.3px">LA $0K</div></div>
<div class="a" style="left:882px;top:708px;width:34px;height:52px;background:#fd625e;overflow:hidden;border-left:1px solid rgba(255,255,255,.35);border-top:1px solid rgba(255,255,255,.35);"><div class="t" style="left:5px;top:35.4px;font-size:13.7px;font-weight:bold;color:#fff;letter-spacing:-0.3px">A...</div></div>
<div class="a" style="left:882px;top:760px;width:34px;height:42px;background:#fd625e;overflow:hidden;border-left:1px solid rgba(255,255,255,.35);border-top:1px solid rgba(255,255,255,.35);"><div class="t" style="left:5px;top:25.4px;font-size:13.7px;font-weight:bold;color:#fff;letter-spacing:-0.3px">K...</div></div>
<div class="a" style="left:719px;top:802px;width:95px;height:81px;background:#f2c80f;overflow:hidden;border-left:1px solid rgba(255,255,255,.35);border-top:1px solid rgba(255,255,255,.35);"><div class="t" style="left:5px;top:64.4px;font-size:13.7px;font-weight:bold;color:#fff;letter-spacing:-0.3px">CA $0K</div></div>
<div class="a" style="left:814px;top:802px;width:56px;height:34px;background:#f2c80f;overflow:hidden;border-left:1px solid rgba(255,255,255,.35);border-top:1px solid rgba(255,255,255,.35);"></div>
<div class="a" style="left:814px;top:836px;width:56px;height:26px;background:#f2c80f;overflow:hidden;border-left:1px solid rgba(255,255,255,.35);border-top:1px solid rgba(255,255,255,.35);"><div class="t" style="left:5px;top:9.4px;font-size:13.7px;font-weight:bold;color:#fff;letter-spacing:-0.3px">PA $...</div></div>
<div class="a" style="left:814px;top:862px;width:56px;height:21px;background:#f2c80f;overflow:hidden;border-left:1px solid rgba(255,255,255,.35);border-top:1px solid rgba(255,255,255,.35);"></div>
<div class="a" style="left:870px;top:802px;width:25px;height:49px;background:#f2c80f;overflow:hidden;border-left:1px solid rgba(255,255,255,.35);border-top:1px solid rgba(255,255,255,.35);"></div>
<div class="a" style="left:895px;top:802px;width:21px;height:49px;background:#f2c80f;overflow:hidden;border-left:1px solid rgba(255,255,255,.35);border-top:1px solid rgba(255,255,255,.35);"></div>
<div class="a" style="left:870px;top:851px;width:30px;height:32px;background:#f2c80f;overflow:hidden;border-left:1px solid rgba(255,255,255,.35);border-top:1px solid rgba(255,255,255,.35);"><div class="t" style="left:5px;top:15.4px;font-size:13.7px;font-weight:bold;color:#fff;letter-spacing:-0.3px">...</div></div>
<div class="a" style="left:900px;top:851px;width:16px;height:16px;background:#f2c80f;overflow:hidden;border-left:1px solid rgba(255,255,255,.35);border-top:1px solid rgba(255,255,255,.35);"></div>
<div class="a" style="left:900px;top:867px;width:11px;height:16px;background:#f2c80f;overflow:hidden;border-left:1px solid rgba(255,255,255,.35);border-top:1px solid rgba(255,255,255,.35);"></div>
<div class="a" style="left:911px;top:867px;width:5px;height:16px;background:#f2c80f;overflow:hidden;border-left:1px solid rgba(255,255,255,.35);border-top:1px solid rgba(255,255,255,.35);"></div>
<div class="t" style="left:300.0px;top:386.4px;font-size:12.5px;color:#e8fffd;">Online</div>
<div class="t" style="left:300.0px;top:680.4px;font-size:12.5px;color:#eee;">Social Media</div>
<div class="t" style="left:724.0px;top:386.4px;font-size:12.5px;color:#fff0ef;">Stores</div>
<div class="t" style="left:724.0px;top:809.4px;font-size:12.5px;color:#fff8dc;">Outlet</div>
<div class="a" style="left:937px;top:353px;width:616px;height:537px;background:#fff"></div>
<div class="a" style="left:937px;top:353px;width:616px;height:26px;background:#f6f6f6"></div>
<div class="t" style="left:943.0px;top:357.1px;font-size:14.7px;color:#000;font-weight:bold;">Total Sales and ROI by State and Channel</div>
<svg class="a" style="left:937px;top:385px" width="300" height="20"><circle cx="13" cy="10" r="5" fill="#01b8aa"/><circle cx="71" cy="10" r="5" fill="#374649"/><circle cx="167" cy="10" r="5" fill="#f2c80f"/><circle cx="224" cy="10" r="5" fill="#fd625e"/></svg>
<div class="t" style="left:956.0px;top:388.1px;font-size:14px;color:#252423;">Online</div>
<div class="t" style="left:1015.0px;top:388.1px;font-size:14px;color:#252423;">Social Media</div>
<div class="t" style="left:1111.0px;top:388.1px;font-size:14px;color:#252423;">Outlet</div>
<div class="t" style="left:1168.0px;top:388.1px;font-size:14px;color:#252423;">Stores</div>
<svg class="a" style="left:943px;top:410px" width="604" height="474"><g transform="translate(-943 -410)">
<rect x="943" y="410" width="604" height="474" fill="#f7f3f0"/>
<path d="M943.0 478.0L947.0 487.0L949.0 540.0L947.0 600.0L955.0 630.0L969.0 661.0L983.0 690.0L1005.0 706.0L1022.0 720.0L1030.4 730.4L1042.2 752.7L1052.7 771.0L1055.3 792.0L1065.8 797.2L1081.5 810.3L1094.6 828.7L1110.3 847.0L1120.8 857.5L1107.7 839.2L1097.2 820.8L1089.4 799.9L1081.5 781.5L1071.0 763.2L1057.9 742.2L1078.9 750.0L1097.2 786.8L1123.4 810.3L1144.4 831.3L1165.4 857.5L1170.6 884.0L943.0 884.0z" fill="#bccfe5"/>
<path d="M943 455 L952 456 L958 462 L960 472 L955 478 L948 481 L943 478z" fill="#bccfe5"/>
<path d="M1264.0 884.0L1261.0 857.0L1262.0 830.0L1264.0 815.0L1274.0 797.2L1292.4 781.5L1318.6 773.6L1341.0 771.0L1353.0 761.0L1360.5 763.2L1386.8 760.5L1407.7 765.8L1428.7 768.4L1439.2 786.8L1449.6 807.7L1457.5 828.7L1465.4 823.4L1468.0 797.2L1465.4 755.3L1475.8 731.7L1489.0 716.0L1502.0 705.5L1515.0 692.4L1523.0 676.7L1517.8 655.7L1528.0 640.0L1536.0 625.0L1547.0 618.0L1547.0 884.0z" fill="#bccfe5"/>
<path d="M1405.0 884.0L1415.0 864.0L1429.0 857.0L1449.0 857.0L1469.0 863.0L1489.0 871.0L1509.0 879.0L1519.0 884.0z" fill="#f7f3f0"/>
<path d="M1370 884 L1380 876 L1392 874 L1400 884z" fill="#f7f3f0"/>
<path d="M1322.9 513.9L1337.5 502.5L1353.7 489.5L1368.4 476.5L1378.1 476.5L1391.1 481.4L1402.5 492.7L1412.2 502.5L1410.6 510.6L1399.2 509.0L1386.2 505.7L1370.0 509.0L1353.7 509.0L1337.5 512.2z" fill="#bccfe5"/>
<path d="M1376.0 520.0L1392.0 512.0L1398.0 530.0L1392.0 560.0L1387.0 590.0L1380.0 596.0L1374.0 580.0L1372.0 550.0z" fill="#bccfe5"/>
<path d="M1430.0 520.0L1445.0 522.0L1460.0 532.0L1471.0 548.0L1466.0 552.0L1452.0 548.0L1440.0 560.0L1433.0 575.0L1427.0 560.0L1432.0 540.0z" fill="#bccfe5"/>
<path d="M1432.0 590.0L1450.0 580.0L1474.0 572.0L1478.0 578.0L1455.0 590.0L1436.0 598.0z" fill="#bccfe5"/>
<path d="M1480.0 566.0L1500.0 560.0L1515.0 562.0L1505.0 570.0L1485.0 572.0z" fill="#bccfe5"/>
<path d="M1497.0 433.0L1505.0 431.0L1508.0 440.0L1506.0 450.0L1511.0 462.0L1506.0 465.0L1500.0 455.0L1501.0 445.0z" fill="#c9d8ea"/><path d="M1522.0 426.0L1531.0 424.0L1533.0 431.0L1524.0 432.0z" fill="#c9d8ea"/><path d="M1544.0 432.0L1547.0 431.0L1547.0 440.0L1541.0 455.0L1536.0 459.0L1537.0 448.0z" fill="#c9d8ea"/><path d="M1522.0 478.0L1531.0 475.0L1538.0 481.0L1534.0 487.0L1524.0 486.0z" fill="#c9d8ea"/><path d="M1486.0 498.0L1492.0 493.0L1498.0 497.0L1494.0 503.0z" fill="#c9d8ea"/><path d="M1500.0 500.0L1508.0 495.0L1515.0 504.0L1512.0 512.0L1503.0 508.0z" fill="#c9d8ea"/><path d="M1514.0 510.0L1520.0 506.0L1522.0 514.0L1516.0 516.0z" fill="#c9d8ea"/><path d="M1533.0 499.0L1537.0 497.0L1538.0 504.0L1534.0 505.0z" fill="#c9d8ea"/><path d="M1465.0 474.0L1471.0 472.0L1473.0 479.0L1467.0 480.0z" fill="#c9d8ea"/><path d="M1440.0 521.0L1465.0 519.0L1474.0 524.0L1462.0 530.0L1440.0 535.0z" fill="#c9d8ea"/><path d="M1240.0 412.0L1252.0 411.0L1256.0 422.0L1262.0 436.0L1258.0 448.0L1251.0 447.0L1248.0 432.0L1242.0 424.0z" fill="#bccfe5"/><path d="M1263.0 412.0L1271.0 414.0L1275.0 430.0L1274.0 448.0L1269.0 449.0L1267.0 432.0z" fill="#bccfe5"/><path d="M1449.5 410.4L1485.0 410.4L1482.2 424.0L1474.0 432.2L1464.5 430.9L1460.4 421.3z" fill="#bccfe5"/><path d="M1362.0 452.0L1369.0 450.0L1374.0 455.0L1373.0 463.0L1368.0 467.0L1362.0 462.0z" fill="#bccfe5"/><path d="M1292.0 452.0L1300.0 447.0L1306.0 452.0L1310.0 460.0L1302.0 462.0L1295.0 459.0z" fill="#bccfe5"/><path d="M1315.0 435.0L1325.0 430.0L1330.0 433.0L1320.0 440.0z" fill="#bccfe5"/><ellipse cx="1005" cy="440" rx="1.5" ry="7" transform="rotate(20 1005 440)" fill="#bccfe5"/><ellipse cx="1030" cy="450" rx="1.5" ry="6" transform="rotate(10 1030 450)" fill="#bccfe5"/><ellipse cx="1033" cy="430" rx="1.5" ry="5" transform="rotate(-10 1033 430)" fill="#bccfe5"/><ellipse cx="1155" cy="445" rx="6" ry="1.5" transform="rotate(-30 1155 445)" fill="#bccfe5"/><ellipse cx="1170" cy="430" rx="4" ry="1.2" transform="rotate(-60 1170 430)" fill="#bccfe5"/><ellipse cx="1190" cy="440" rx="5" ry="1.5" transform="rotate(0 1190 440)" fill="#bccfe5"/><ellipse cx="1278" cy="425" rx="5" ry="3" transform="rotate(20 1278 425)" fill="#bccfe5"/><ellipse cx="1330" cy="430" rx="6" ry="2" transform="rotate(30 1330 430)" fill="#bccfe5"/><ellipse cx="1345" cy="440" rx="3" ry="4" transform="rotate(0 1345 440)" fill="#bccfe5"/><ellipse cx="1330" cy="470" rx="4" ry="2" transform="rotate(0 1330 470)" fill="#bccfe5"/><ellipse cx="1285" cy="500" rx="6" ry="3" transform="rotate(-20 1285 500)" fill="#bccfe5"/><ellipse cx="1300" cy="505" rx="3" ry="2" transform="rotate(0 1300 505)" fill="#bccfe5"/><ellipse cx="1400" cy="425" rx="4" ry="2" transform="rotate(20 1400 425)" fill="#bccfe5"/><ellipse cx="1440" cy="470" rx="4" ry="3" transform="rotate(0 1440 470)" fill="#bccfe5"/><ellipse cx="1060" cy="490" rx="2" ry="3" transform="rotate(0 1060 490)" fill="#bccfe5"/><ellipse cx="1100" cy="530" rx="4" ry="2" transform="rotate(-30 1100 530)" fill="#bccfe5"/><ellipse cx="1130" cy="555" rx="2" ry="3" transform="rotate(0 1130 555)" fill="#bccfe5"/><ellipse cx="1010" cy="430" rx="2" ry="4" transform="rotate(0 1010 430)" fill="#bccfe5"/>
<path d="M943.0 473.0L1288.7 473.2L1293.6 476.5L1308.2 481.4L1324.5 486.2L1353.7 489.5L1368.4 484.6L1402.5 502.5L1420.0 520.0L1428.0 545.0L1432.0 575.0L1450.0 580.0L1474.0 572.0L1492.0 562.0L1515.0 545.0L1547.0 540.0" fill="none" stroke="#cbc8c4" stroke-width="2" stroke-linejoin="round"/>
<path d="M1029.0 730.4L1058.0 729.0L1060.0 734.0L1100.0 747.4L1134.0 747.4L1135.0 742.2L1155.0 742.2L1176.0 760.5L1191.6 778.9L1202.0 768.4L1215.0 768.4L1228.3 786.8L1237.5 804.0L1245.6 816.0L1263.0 820.0" fill="none" stroke="#cbc8c4" stroke-width="2" stroke-linejoin="round"/>
<path d="M1018.0 410.0L1037.5 424.5L1053.7 442.4L1060.2 458.6L1063.5 471.6" fill="none" stroke="#bfbcb8" stroke-width="1.2" stroke-dasharray="4.5 3"/><path d="M1114.7 410.0L1114.7 473.0" fill="none" stroke="#bfbcb8" stroke-width="1.2" stroke-dasharray="4.5 3"/><path d="M1214.0 410.0L1215.4 473.0" fill="none" stroke="#bfbcb8" stroke-width="1.2" stroke-dasharray="4.5 3"/><path d="M1288.7 410.0L1288.7 473.0" fill="none" stroke="#bfbcb8" stroke-width="1.2" stroke-dasharray="4.5 3"/><path d="M1473.4 425.4L1473.4 500.4L1481.0 514.0L1494.5 520.8L1505.4 530.3L1516.0 537.0" fill="none" stroke="#bfbcb8" stroke-width="1.2" stroke-dasharray="4.5 3"/><path d="M950.0 526.0L1031.5 526.0" fill="none" stroke="#bfbcb8" stroke-width="1.2" stroke-dasharray="4.5 3"/><path d="M1031.5 473.0L1031.5 527.0L1038.0 535.0L1031.5 560.0L1031.5 591.0" fill="none" stroke="#bfbcb8" stroke-width="1.2" stroke-dasharray="4.5 3"/><path d="M1042.4 474.0L1041.5 486.0L1050.5 502.5L1061.9 515.5L1063.5 531.7L1070.0 535.0L1081.3 548.0L1100.8 548.0" fill="none" stroke="#bfbcb8" stroke-width="1.2" stroke-dasharray="4.5 3"/><path d="M943.8 591.0L1101.3 591.0" fill="none" stroke="#bfbcb8" stroke-width="1.2" stroke-dasharray="4.5 3"/><path d="M1101.3 542.3L1101.3 606.2L1184.3 606.2L1184.3 473.0" fill="none" stroke="#bfbcb8" stroke-width="1.2" stroke-dasharray="4.5 3"/><path d="M1101.3 542.3L1184.3 542.3" fill="none" stroke="#bfbcb8" stroke-width="1.2" stroke-dasharray="4.5 3"/><path d="M1184.3 606.2L1207.0 606.2L1207.0 667.5" fill="none" stroke="#bfbcb8" stroke-width="1.2" stroke-dasharray="4.5 3"/><path d="M1066.4 591.0L1066.4 668.5" fill="none" stroke="#bfbcb8" stroke-width="1.2" stroke-dasharray="4.5 3"/><path d="M995.7 591.0L995.7 614.7L1064.5 680.8L1060.8 703.4L1057.0 722.3L1053.2 729.8" fill="none" stroke="#bfbcb8" stroke-width="1.2" stroke-dasharray="4.5 3"/><path d="M1125.8 606.2L1125.8 748.0" fill="none" stroke="#bfbcb8" stroke-width="1.2" stroke-dasharray="4.5 3"/><path d="M1066.4 667.5L1296.9 667.5" fill="none" stroke="#bfbcb8" stroke-width="1.2" stroke-dasharray="4.5 3"/><path d="M1196.6 667.5L1196.6 748.0" fill="none" stroke="#bfbcb8" stroke-width="1.2" stroke-dasharray="4.5 3"/><path d="M1196.6 675.0L1232.5 675.0L1232.5 703.4L1260.0 712.0L1296.9 712.0" fill="none" stroke="#bfbcb8" stroke-width="1.2" stroke-dasharray="4.5 3"/><path d="M1184.3 525.8L1273.3 525.8" fill="none" stroke="#bfbcb8" stroke-width="1.2" stroke-dasharray="4.5 3"/><path d="M1184.3 575.6L1276.0 575.6" fill="none" stroke="#bfbcb8" stroke-width="1.2" stroke-dasharray="4.5 3"/><path d="M1270.0 473.0L1265.0 500.0L1273.3 525.8L1276.0 575.6L1280.0 590.0L1283.0 612.0" fill="none" stroke="#bfbcb8" stroke-width="1.2" stroke-dasharray="4.5 3"/><path d="M1207.0 616.0L1296.9 616.0" fill="none" stroke="#bfbcb8" stroke-width="1.2" stroke-dasharray="4.5 3"/><path d="M1273.3 567.7L1333.6 567.7" fill="none" stroke="#bfbcb8" stroke-width="1.2" stroke-dasharray="4.5 3"/><path d="M1283.0 612.3L1338.8 612.3" fill="none" stroke="#bfbcb8" stroke-width="1.2" stroke-dasharray="4.5 3"/><path d="M1296.9 616.0L1296.9 725.0" fill="none" stroke="#bfbcb8" stroke-width="1.2" stroke-dasharray="4.5 3"/><path d="M1296.9 675.0L1345.0 675.0" fill="none" stroke="#bfbcb8" stroke-width="1.2" stroke-dasharray="4.5 3"/><path d="M1304.7 725.0L1345.0 725.0" fill="none" stroke="#bfbcb8" stroke-width="1.2" stroke-dasharray="4.5 3"/><path d="M1304.7 725.0L1304.7 767.0" fill="none" stroke="#bfbcb8" stroke-width="1.2" stroke-dasharray="4.5 3"/><path d="M1321.0 515.5L1316.4 535.0L1321.0 554.5L1333.6 567.7L1338.8 590.0L1345.0 612.0L1350.0 640.0L1345.0 668.0L1350.0 700.0L1340.0 725.0L1345.0 760.0" fill="none" stroke="#bfbcb8" stroke-width="1.2" stroke-dasharray="4.5 3"/><path d="M1338.8 594.0L1378.1 594.0L1454.0 594.0" fill="none" stroke="#bfbcb8" stroke-width="1.2" stroke-dasharray="4.5 3"/><path d="M1378.1 594.0L1378.1 651.6" fill="none" stroke="#bfbcb8" stroke-width="1.2" stroke-dasharray="4.5 3"/><path d="M1414.8 594.0L1414.8 646.0" fill="none" stroke="#bfbcb8" stroke-width="1.2" stroke-dasharray="4.5 3"/><path d="M1459.3 573.0L1459.3 630.0" fill="none" stroke="#bfbcb8" stroke-width="1.2" stroke-dasharray="4.5 3"/><path d="M1459.3 573.0L1517.0 573.0" fill="none" stroke="#bfbcb8" stroke-width="1.2" stroke-dasharray="4.5 3"/><path d="M1350.0 660.0L1380.0 652.0L1400.0 645.0L1430.0 630.0L1459.0 625.0" fill="none" stroke="#bfbcb8" stroke-width="1.2" stroke-dasharray="4.5 3"/><path d="M1459.0 625.0L1470.0 650.0L1495.0 660.0L1530.0 650.0" fill="none" stroke="#bfbcb8" stroke-width="1.2" stroke-dasharray="4.5 3"/><path d="M1345.0 667.3L1532.7 667.3" fill="none" stroke="#bfbcb8" stroke-width="1.2" stroke-dasharray="4.5 3"/><path d="M1345.0 696.0L1450.0 696.0L1490.0 702.0L1515.0 710.0" fill="none" stroke="#bfbcb8" stroke-width="1.2" stroke-dasharray="4.5 3"/><path d="M1380.7 696.0L1380.7 761.6" fill="none" stroke="#bfbcb8" stroke-width="1.2" stroke-dasharray="4.5 3"/><path d="M1404.3 696.0L1404.3 761.6" fill="none" stroke="#bfbcb8" stroke-width="1.2" stroke-dasharray="4.5 3"/><path d="M1380.7 761.6L1450.0 761.6" fill="none" stroke="#bfbcb8" stroke-width="1.2" stroke-dasharray="4.5 3"/><path d="M1450.0 696.0L1470.0 716.0L1490.0 730.0" fill="none" stroke="#bfbcb8" stroke-width="1.2" stroke-dasharray="4.5 3"/><path d="M1517.0 573.0L1522.0 610.0" fill="none" stroke="#bfbcb8" stroke-width="1.2" stroke-dasharray="4.5 3"/><path d="M1123.0 750.0L1128.0 787.0L1134.0 808.0L1150.0 823.0L1168.0 850.0L1183.0 884.0" fill="none" stroke="#bfbcb8" stroke-width="1.2" stroke-dasharray="4.5 3"/><path d="M1191.6 778.9L1186.0 800.0L1190.0 820.0L1210.0 835.0L1222.0 860.0L1230.0 884.0" fill="none" stroke="#bfbcb8" stroke-width="1.2" stroke-dasharray="4.5 3"/><path d="M1150.0 823.0L1175.0 815.0L1190.0 820.0" fill="none" stroke="#bfbcb8" stroke-width="1.2" stroke-dasharray="4.5 3"/><path d="M1210.0 835.0L1240.0 830.0L1258.0 845.0" fill="none" stroke="#bfbcb8" stroke-width="1.2" stroke-dasharray="4.5 3"/><path d="M1228.0 800.0L1240.0 820.0L1258.0 835.0" fill="none" stroke="#bfbcb8" stroke-width="1.2" stroke-dasharray="4.5 3"/><path d="M1175.0 860.0L1205.0 868.0L1240.0 862.0L1262.0 866.0" fill="none" stroke="#bfbcb8" stroke-width="1.2" stroke-dasharray="4.5 3"/><path d="M1052.0 800.0L1060.0 797.0" fill="none" stroke="#bfbcb8" stroke-width="1.2" stroke-dasharray="4.5 3"/><path d="M1100.0 800.0L1118.0 805.0" fill="none" stroke="#bfbcb8" stroke-width="1.2" stroke-dasharray="4.5 3"/><path d="M1200.0 875.0L1215.0 884.0" fill="none" stroke="#bfbcb8" stroke-width="1.2" stroke-dasharray="4.5 3"/>
<text x="1121" y="510.6" text-anchor="middle" font-family="Liberation Sans" font-size="10" fill="#7d7b79" textLength="40.4" lengthAdjust="spacingAndGlyphs">MONTANA</text><text x="1226" y="502.1" text-anchor="middle" font-family="Liberation Sans" font-size="10" fill="#7d7b79" textLength="64.4" lengthAdjust="spacingAndGlyphs">NORTH DAKOTA</text><text x="1297" y="523.1" text-anchor="middle" font-family="Liberation Sans" font-size="10" fill="#7d7b79" textLength="48.1" lengthAdjust="spacingAndGlyphs">MINNESOTA</text><text x="1354.5" y="551.6" text-anchor="middle" font-family="Liberation Sans" font-size="10" fill="#7d7b79" textLength="47.4" lengthAdjust="spacingAndGlyphs">WISCONSIN</text><text x="1415" y="572.6" text-anchor="middle" font-family="Liberation Sans" font-size="10" fill="#7d7b79" textLength="41.0" lengthAdjust="spacingAndGlyphs">MICHIGAN</text><text x="993" y="564.6" text-anchor="middle" font-family="Liberation Sans" font-size="10" fill="#7d7b79" textLength="36.5" lengthAdjust="spacingAndGlyphs">OREGON</text><text x="1070" y="571.6" text-anchor="middle" font-family="Liberation Sans" font-size="10" fill="#7d7b79" textLength="26.0" lengthAdjust="spacingAndGlyphs">IDAHO</text><text x="1142" y="576.6" text-anchor="middle" font-family="Liberation Sans" font-size="10" fill="#7d7b79" textLength="41.0" lengthAdjust="spacingAndGlyphs">WYOMING</text><text x="1229" y="554.6" text-anchor="middle" font-family="Liberation Sans" font-size="10" fill="#7d7b79" textLength="64.1" lengthAdjust="spacingAndGlyphs">SOUTH DAKOTA</text><text x="1308" y="583.6" text-anchor="middle" font-family="Liberation Sans" font-size="10" fill="#7d7b79" textLength="21.6" lengthAdjust="spacingAndGlyphs">IOWA</text><text x="1237.6" y="601.6" text-anchor="middle" font-family="Liberation Sans" font-size="10" fill="#7d7b79" textLength="44.7" lengthAdjust="spacingAndGlyphs">NEBRASKA</text><text x="1032" y="625.6" text-anchor="middle" font-family="Liberation Sans" font-size="10" fill="#7d7b79" textLength="33.1" lengthAdjust="spacingAndGlyphs">NEVADA</text><text x="1097" y="634.6" text-anchor="middle" font-family="Liberation Sans" font-size="10" fill="#7d7b79" textLength="21.7" lengthAdjust="spacingAndGlyphs">UTAH</text><text x="1166" y="649.6" text-anchor="middle" font-family="Liberation Sans" font-size="10" fill="#7d7b79" textLength="46.9" lengthAdjust="spacingAndGlyphs">COLORADO</text><text x="1251" y="649.6" text-anchor="middle" font-family="Liberation Sans" font-size="10" fill="#7d7b79" textLength="33.3" lengthAdjust="spacingAndGlyphs">KANSAS</text><text x="1357" y="618.6" text-anchor="middle" font-family="Liberation Sans" font-size="10" fill="#7d7b79" textLength="33.7" lengthAdjust="spacingAndGlyphs">ILLINOIS</text><text x="1395" y="634.6" text-anchor="middle" font-family="Liberation Sans" font-size="10" fill="#7d7b79" textLength="33.3" lengthAdjust="spacingAndGlyphs">INDIANA</text><text x="1437" y="614.6" text-anchor="middle" font-family="Liberation Sans" font-size="10" fill="#7d7b79" textLength="21.0" lengthAdjust="spacingAndGlyphs">OHIO</text><text x="1463" y="644.1" text-anchor="middle" font-family="Liberation Sans" font-size="10" fill="#7d7b79" textLength="61.8" lengthAdjust="spacingAndGlyphs">WEST VIRGINIA</text><text x="1525" y="646.6" text-anchor="middle" font-family="Liberation Sans" font-size="10" fill="#7d7b79" textLength="45.4" lengthAdjust="spacingAndGlyphs">DELAWARE</text><text x="1536" y="630.6" text-anchor="middle" font-family="Liberation Sans" font-size="10" fill="#7d7b79" textLength="14.6" lengthAdjust="spacingAndGlyphs">N.J.</text><text x="1327" y="658.6" text-anchor="middle" font-family="Liberation Sans" font-size="10" fill="#7d7b79" textLength="40.6" lengthAdjust="spacingAndGlyphs">MISSOURI</text><text x="1407.5" y="666.6" text-anchor="middle" font-family="Liberation Sans" font-size="10" fill="#7d7b79" textLength="44.7" lengthAdjust="spacingAndGlyphs">KENTUCKY</text><text x="1484" y="666.6" text-anchor="middle" font-family="Liberation Sans" font-size="10" fill="#7d7b79" textLength="36.0" lengthAdjust="spacingAndGlyphs">VIRGINIA</text><text x="1008.6" y="684.6" text-anchor="middle" font-family="Liberation Sans" font-size="10" fill="#7d7b79" textLength="49.2" lengthAdjust="spacingAndGlyphs">CALIFORNIA</text><text x="1094" y="707.6" text-anchor="middle" font-family="Liberation Sans" font-size="10" fill="#7d7b79" textLength="36.5" lengthAdjust="spacingAndGlyphs">ARIZONA</text><text x="1162" y="714.6" text-anchor="middle" font-family="Liberation Sans" font-size="10" fill="#7d7b79" textLength="53.8" lengthAdjust="spacingAndGlyphs">NEW MEXICO</text><text x="1266.5" y="689.6" text-anchor="middle" font-family="Liberation Sans" font-size="10" fill="#7d7b79" textLength="46.5" lengthAdjust="spacingAndGlyphs">OKLAHOMA</text><text x="1318" y="708.6" text-anchor="middle" font-family="Liberation Sans" font-size="10" fill="#7d7b79" textLength="44.7" lengthAdjust="spacingAndGlyphs">ARKANSAS</text><text x="1388.6" y="687.6" text-anchor="middle" font-family="Liberation Sans" font-size="10" fill="#7d7b79" textLength="49.7" lengthAdjust="spacingAndGlyphs">TENNESSEE</text><text x="1486.6" y="691.6" text-anchor="middle" font-family="Liberation Sans" font-size="10" fill="#7d7b79" textLength="11.8" lengthAdjust="spacingAndGlyphs">NC</text><text x="1462" y="713.6" text-anchor="middle" font-family="Liberation Sans" font-size="10" fill="#7d7b79" textLength="11.4" lengthAdjust="spacingAndGlyphs">SC</text><text x="1251" y="749.6" text-anchor="middle" font-family="Liberation Sans" font-size="10" fill="#7d7b79" textLength="26.9" lengthAdjust="spacingAndGlyphs">TEXAS</text><text x="1352" y="749.6" text-anchor="middle" font-family="Liberation Sans" font-size="10" fill="#7d7b79" textLength="48.8" lengthAdjust="spacingAndGlyphs">MISSISSIPPI</text><text x="1382" y="734.6" text-anchor="middle" font-family="Liberation Sans" font-size="10" fill="#7d7b79" textLength="38.7" lengthAdjust="spacingAndGlyphs">ALABAMA</text><text x="1328" y="764.6" text-anchor="middle" font-family="Liberation Sans" font-size="10" fill="#7d7b79" textLength="43.8" lengthAdjust="spacingAndGlyphs">LOUISIANA</text><text x="1428" y="749.6" text-anchor="middle" font-family="Liberation Sans" font-size="10" fill="#7d7b79" textLength="38.3" lengthAdjust="spacingAndGlyphs">GEORGIA</text><text x="1451.5" y="803.0" text-anchor="middle" font-family="Liberation Sans" font-size="10" fill="#7d7b79" textLength="35.5" lengthAdjust="spacingAndGlyphs">FLORIDA</text><text x="989" y="508.6" text-anchor="middle" font-family="Liberation Sans" font-size="10" fill="#7d7b79" textLength="56.0" lengthAdjust="spacingAndGlyphs">WASHINGTON</text><text x="1491" y="882.6" text-anchor="middle" font-family="Liberation Sans" font-size="10" fill="#7d7b79" textLength="22.8" lengthAdjust="spacingAndGlyphs">CUBA</text>
<text x="1240" y="626" text-anchor="middle" font-family="Liberation Sans" font-size="16" fill="#8a8886" textLength="120" lengthAdjust="spacingAndGlyphs">UNITED STATES</text><text x="1212" y="875" text-anchor="middle" font-family="Liberation Sans" font-size="12" fill="#8a8886">MEXICO</text><text x="1469" y="851" text-anchor="middle" font-family="Liberation Sans" font-size="14" fill="#7a7876">Havana</text><text x="1349" y="826" text-anchor="middle" font-family="Liberation Sans" font-size="10.5" fill="#5b7bbd">Gulf of</text><text x="1349" y="838" text-anchor="middle" font-family="Liberation Sans" font-size="10.5" fill="#5b7bbd">Mexico</text><circle cx="1440" cy="858" r="3.5" fill="#f7c6c0" stroke="#e86a5e" stroke-width="1"/><circle cx="1440" cy="858" r="1.3" fill="#e0483c"/>
<path d="M989.8 501.5L989.8 467.0A34.5 34.5 0 0 1 1002.2 533.7z" fill="#01b8aa" fill-opacity=".62" stroke="#0b6e66" stroke-width="1.3" stroke-linejoin="round"/><path d="M989.8 501.5L1002.2 533.7A34.5 34.5 0 0 1 956.8 511.6z" fill="#fd625e" fill-opacity=".62" stroke="#8f2a26" stroke-width="1.3" stroke-linejoin="round"/><path d="M989.8 501.5L956.8 511.6A34.5 34.5 0 0 1 978.0 469.1z" fill="#374649" fill-opacity=".62" stroke="#1a2224" stroke-width="1.3" stroke-linejoin="round"/><path d="M989.8 501.5L978.0 469.1A34.5 34.5 0 0 1 989.8 467.0z" fill="#f2c80f" fill-opacity=".62" stroke="#8f7406" stroke-width="1.3" stroke-linejoin="round"/>
<path d="M1000.5 664.3L1000.5 603.3A61 61 0 0 1 1045.1 705.9z" fill="#fd625e" fill-opacity=".62" stroke="#8f2a26" stroke-width="1.3" stroke-linejoin="round"/><path d="M1000.5 664.3L1045.1 705.9A61 61 0 0 1 948.8 696.6z" fill="#01b8aa" fill-opacity=".62" stroke="#0b6e66" stroke-width="1.3" stroke-linejoin="round"/><path d="M1000.5 664.3L948.8 696.6A61 61 0 0 1 973.8 609.5z" fill="#374649" fill-opacity=".62" stroke="#1a2224" stroke-width="1.3" stroke-linejoin="round"/><path d="M1000.5 664.3L973.8 609.5A61 61 0 0 1 1000.5 603.3z" fill="#f2c80f" fill-opacity=".62" stroke="#8f7406" stroke-width="1.3" stroke-linejoin="round"/>
<path d="M1166.6 638.1L1166.6 603.8A34.3 34.3 0 0 1 1176.6 670.9z" fill="#01b8aa" fill-opacity=".62" stroke="#0b6e66" stroke-width="1.3" stroke-linejoin="round"/><path d="M1166.6 638.1L1176.6 670.9A34.3 34.3 0 0 1 1132.8 632.1z" fill="#374649" fill-opacity=".62" stroke="#1a2224" stroke-width="1.3" stroke-linejoin="round"/><path d="M1166.6 638.1L1132.8 632.1A34.3 34.3 0 0 1 1155.4 605.7z" fill="#fd625e" fill-opacity=".62" stroke="#8f2a26" stroke-width="1.3" stroke-linejoin="round"/><path d="M1166.6 638.1L1155.4 605.7A34.3 34.3 0 0 1 1166.6 603.8z" fill="#f2c80f" fill-opacity=".62" stroke="#8f7406" stroke-width="1.3" stroke-linejoin="round"/>
<path d="M1251.3 645.8L1251.3 622.3A23.5 23.5 0 0 1 1252.5 669.3z" fill="#01b8aa" fill-opacity=".62" stroke="#0b6e66" stroke-width="1.3" stroke-linejoin="round"/><path d="M1251.3 645.8L1252.5 669.3A23.5 23.5 0 0 1 1231.8 632.7z" fill="#374649" fill-opacity=".62" stroke="#1a2224" stroke-width="1.3" stroke-linejoin="round"/><path d="M1251.3 645.8L1231.8 632.7A23.5 23.5 0 0 1 1250.1 622.3z" fill="#fd625e" fill-opacity=".62" stroke="#8f2a26" stroke-width="1.3" stroke-linejoin="round"/><path d="M1251.3 645.8L1250.1 622.3A23.5 23.5 0 0 1 1251.3 622.3z" fill="#f2c80f" fill-opacity=".62" stroke="#8f7406" stroke-width="1.3" stroke-linejoin="round"/>
<path d="M1321.5 698.4L1321.5 680.2A18.2 18.2 0 0 1 1326.2 716.0z" fill="#01b8aa" fill-opacity=".62" stroke="#0b6e66" stroke-width="1.3" stroke-linejoin="round"/><path d="M1321.5 698.4L1326.2 716.0A18.2 18.2 0 0 1 1303.3 697.1z" fill="#374649" fill-opacity=".62" stroke="#1a2224" stroke-width="1.3" stroke-linejoin="round"/><path d="M1321.5 698.4L1303.3 697.1A18.2 18.2 0 0 1 1318.7 680.4z" fill="#fd625e" fill-opacity=".62" stroke="#8f2a26" stroke-width="1.3" stroke-linejoin="round"/><path d="M1321.5 698.4L1318.7 680.4A18.2 18.2 0 0 1 1321.5 680.2z" fill="#f2c80f" fill-opacity=".62" stroke="#8f7406" stroke-width="1.3" stroke-linejoin="round"/>
<path d="M1327.7 753.5L1327.7 724.8A28.7 28.7 0 1 1 1325.7 782.1z" fill="#01b8aa" fill-opacity=".62" stroke="#0b6e66" stroke-width="1.3" stroke-linejoin="round"/><path d="M1327.7 753.5L1325.7 782.1A28.7 28.7 0 0 1 1303.4 738.3z" fill="#374649" fill-opacity=".62" stroke="#1a2224" stroke-width="1.3" stroke-linejoin="round"/><path d="M1327.7 753.5L1303.4 738.3A28.7 28.7 0 0 1 1326.2 724.8z" fill="#fd625e" fill-opacity=".62" stroke="#8f2a26" stroke-width="1.3" stroke-linejoin="round"/><path d="M1327.7 753.5L1326.2 724.8A28.7 28.7 0 0 1 1327.7 724.8z" fill="#f2c80f" fill-opacity=".62" stroke="#8f7406" stroke-width="1.3" stroke-linejoin="round"/>
<path d="M1427.1 730.3L1427.1 694.7A35.6 35.6 0 0 1 1436.3 764.7z" fill="#01b8aa" fill-opacity=".62" stroke="#0b6e66" stroke-width="1.3" stroke-linejoin="round"/><path d="M1427.1 730.3L1436.3 764.7A35.6 35.6 0 0 1 1391.6 733.4z" fill="#374649" fill-opacity=".62" stroke="#1a2224" stroke-width="1.3" stroke-linejoin="round"/><path d="M1427.1 730.3L1391.6 733.4A35.6 35.6 0 0 1 1418.5 695.8z" fill="#fd625e" fill-opacity=".62" stroke="#8f2a26" stroke-width="1.3" stroke-linejoin="round"/><path d="M1427.1 730.3L1418.5 695.8A35.6 35.6 0 0 1 1427.1 694.7z" fill="#f2c80f" fill-opacity=".62" stroke="#8f7406" stroke-width="1.3" stroke-linejoin="round"/>
<path d="M1400.4 544.7L1400.4 508.8A35.9 35.9 0 1 1 1391.7 579.5z" fill="#01b8aa" fill-opacity=".62" stroke="#0b6e66" stroke-width="1.3" stroke-linejoin="round"/><path d="M1400.4 544.7L1391.7 579.5A35.9 35.9 0 0 1 1366.5 533.0z" fill="#374649" fill-opacity=".62" stroke="#1a2224" stroke-width="1.3" stroke-linejoin="round"/><path d="M1400.4 544.7L1366.5 533.0A35.9 35.9 0 0 1 1392.3 509.7z" fill="#fd625e" fill-opacity=".62" stroke="#8f2a26" stroke-width="1.3" stroke-linejoin="round"/><path d="M1400.4 544.7L1392.3 509.7A35.9 35.9 0 0 1 1400.4 508.8z" fill="#f2c80f" fill-opacity=".62" stroke="#8f7406" stroke-width="1.3" stroke-linejoin="round"/>
<path d="M1519.4 575.4L1519.4 533.4A42 42 0 0 1 1548.6 605.6z" fill="#01b8aa" fill-opacity=".62" stroke="#0b6e66" stroke-width="1.3" stroke-linejoin="round"/><path d="M1519.4 575.4L1548.6 605.6A42 42 0 0 1 1485.0 599.5z" fill="#374649" fill-opacity=".62" stroke="#1a2224" stroke-width="1.3" stroke-linejoin="round"/><path d="M1519.4 575.4L1485.0 599.5A42 42 0 0 1 1507.1 535.2z" fill="#fd625e" fill-opacity=".62" stroke="#8f2a26" stroke-width="1.3" stroke-linejoin="round"/><path d="M1519.4 575.4L1507.1 535.2A42 42 0 0 1 1519.4 533.4z" fill="#f2c80f" fill-opacity=".62" stroke="#8f7406" stroke-width="1.3" stroke-linejoin="round"/>
<path d="M1493.0 608.5L1493.0 568.0A40.5 40.5 0 0 1 1503.5 647.6z" fill="#01b8aa" fill-opacity=".62" stroke="#0b6e66" stroke-width="1.3" stroke-linejoin="round"/><path d="M1493.0 608.5L1503.5 647.6A40.5 40.5 0 0 1 1452.7 604.3z" fill="#374649" fill-opacity=".62" stroke="#1a2224" stroke-width="1.3" stroke-linejoin="round"/><path d="M1493.0 608.5L1452.7 604.3A40.5 40.5 0 0 1 1483.9 569.0z" fill="#fd625e" fill-opacity=".62" stroke="#8f2a26" stroke-width="1.3" stroke-linejoin="round"/><path d="M1493.0 608.5L1483.9 569.0A40.5 40.5 0 0 1 1493.0 568.0z" fill="#f2c80f" fill-opacity=".62" stroke="#8f7406" stroke-width="1.3" stroke-linejoin="round"/>
<rect x="948" y="864" width="4" height="4" fill="#f25022"/><rect x="952.5" y="864" width="4" height="4" fill="#7fba00"/><rect x="948" y="868.5" width="4" height="4" fill="#00a4ef"/><rect x="952.5" y="868.5" width="4" height="4" fill="#ffb900"/><text x="959" y="871.5" font-family="Liberation Sans" font-size="9" fill="#666">Microsoft Bing</text><text x="1366" y="875" font-family="Liberation Sans" font-size="9.5" fill="#111" textLength="122" lengthAdjust="spacingAndGlyphs">© 2026 Microsoft Corporation</text><text x="1495" y="875" font-family="Liberation Sans" font-size="9.5" fill="#2b4f9e">Terms</text><path d="M1495 877.5h27" stroke="#2b4f9e" stroke-width=".8"/></g></svg>
</body></html>
